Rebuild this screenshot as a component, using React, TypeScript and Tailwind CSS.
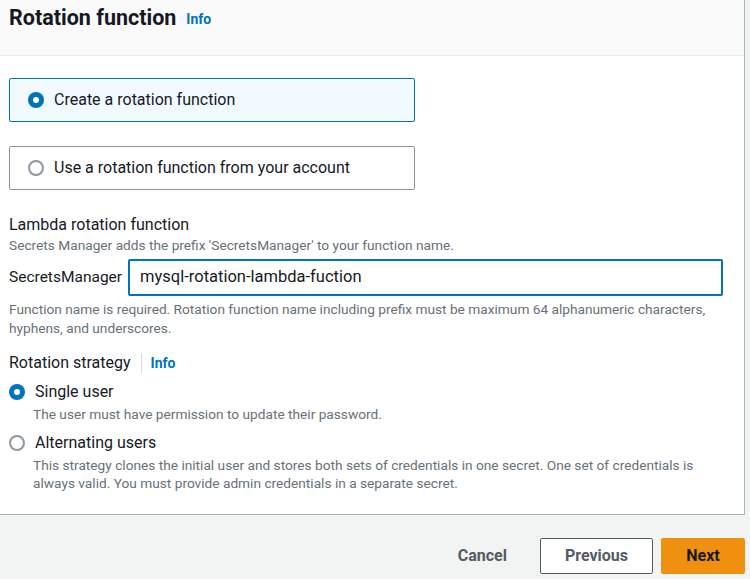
import React from "react";

function Radio({ checked }: { checked: boolean }) {
  return checked ? (
    <span className="inline-flex h-4 w-4 shrink-0 items-center justify-center rounded-full bg-[#0073bb]">
      <span className="h-[6px] w-[6px] rounded-full bg-white" />
    </span>
  ) : (
    <span className="inline-block h-4 w-4 shrink-0 rounded-full border-2 border-[#8d979f] bg-white" />
  );
}

export default function App() {
  return (
    <div
      className="min-h-[579px] w-[750px] bg-[#f2f3f3] text-[#16191f]"
      style={{ fontFamily: "Roboto, 'Liberation Sans', sans-serif" }}
    >
      <div className="w-[745px] border-b border-r border-[#aab7b8] bg-white">
        {/* header */}
        <div className="flex h-[56px] items-start gap-[10px] border-b border-[#eaeded] bg-[#fafafa] px-[9px] pt-[4px]">
          <h2 className="text-[21.5px] font-bold leading-[28px]">Rotation function</h2>
          <a className="pt-[5px] text-[14px] font-bold leading-[20px] text-[#0073bb]">Info</a>
        </div>

        {/* body */}
        <div className="px-[9px] pb-[22px] pt-[22px]">
          <div className="flex w-[406px] flex-col gap-[24px]">
            <label className="flex h-[44px] items-center gap-[10px] rounded-[2px] border border-[#0073bb] bg-[#f1faff] px-[18px]">
              <Radio checked />
              <span className="text-[16px]">Create a rotation function</span>
            </label>
            <label className="flex h-[44px] items-center gap-[10px] rounded-[2px] border border-[#879596] bg-white px-[18px]">
              <Radio checked={false} />
              <span className="text-[16px]">Use a rotation function from your account</span>
            </label>
          </div>

          <div className="mt-[25px]">
            <div className="text-[16px] leading-[20px]">Lambda rotation function</div>
            <div className="mt-[2px] text-[13.7px] leading-[16px] text-[#687078]">
              Secrets Manager adds the prefix 'SecretsManager' to your function name.
            </div>
            <div className="mt-[6px] flex items-center gap-[6px]">
              <span className="text-[15.5px]">SecretsManager</span>
              <div className="flex h-[37px] w-[595px] items-center rounded-[2px] border-2 border-[#0073bb] px-[10px] text-[16.5px]">
                mysql-rotation-lambda-fuction
              </div>
            </div>
            <div className="mt-[4px] whitespace-nowrap text-[13.7px] leading-[19px] text-[#687078]">
              Function name is required. Rotation function name including prefix must be maximum 64 alphanumeric characters,
              <br />
              hyphens, and underscores.
            </div>
          </div>

          <div className="mt-[15px]">
            <div className="flex items-center text-[16px] leading-[20px]">
              <span className="pr-[10px]">Rotation strategy</span>
              <span className="h-[20px] border-l border-[#d5dbdb]" />
              <a className="pl-[9px] text-[14px] font-bold text-[#0073bb]">Info</a>
            </div>

            <div className="mt-[9px] flex flex-col gap-[10px]">
              <div>
                <div className="flex items-center gap-[10px]">
                  <Radio checked />
                  <span className="text-[16px] leading-[20px]">Single user</span>
                </div>
                <div className="mt-[3px] pl-[24px] text-[13.7px] leading-[18px] text-[#687078]">
                  The user must have permission to update their password.
                </div>
              </div>
              <div>
                <div className="flex items-center gap-[10px]">
                  <Radio checked={false} />
                  <span className="text-[16px] leading-[20px]">Alternating users</span>
                </div>
                <div className="mt-[3px] whitespace-nowrap pl-[24px] text-[13.7px] leading-[18px] text-[#687078]">
                  This strategy clones the initial user and stores both sets of credentials in one secret. One set of credentials is
                  <br />
                  always valid. You must provide admin credentials in a separate secret.
                </div>
              </div>
            </div>
          </div>
        </div>
      </div>

      {/* footer buttons */}
      <div className="flex w-[745px] items-center justify-end pt-[23px]">
        <button className="mr-[33px] text-[16px] font-bold text-[#545b64]">Cancel</button>
        <button className="mr-[8px] h-[36px] w-[113px] rounded-[2px] border border-[#545b64] bg-white text-[16px] font-bold text-[#545b64]">
          Previous
        </button>
        <button className="h-[36px] w-[84px] rounded-[2px] bg-[#ef900f] text-[16px] font-bold text-[#16191f]">
          Next
        </button>
      </div>
    </div>
  );
}
